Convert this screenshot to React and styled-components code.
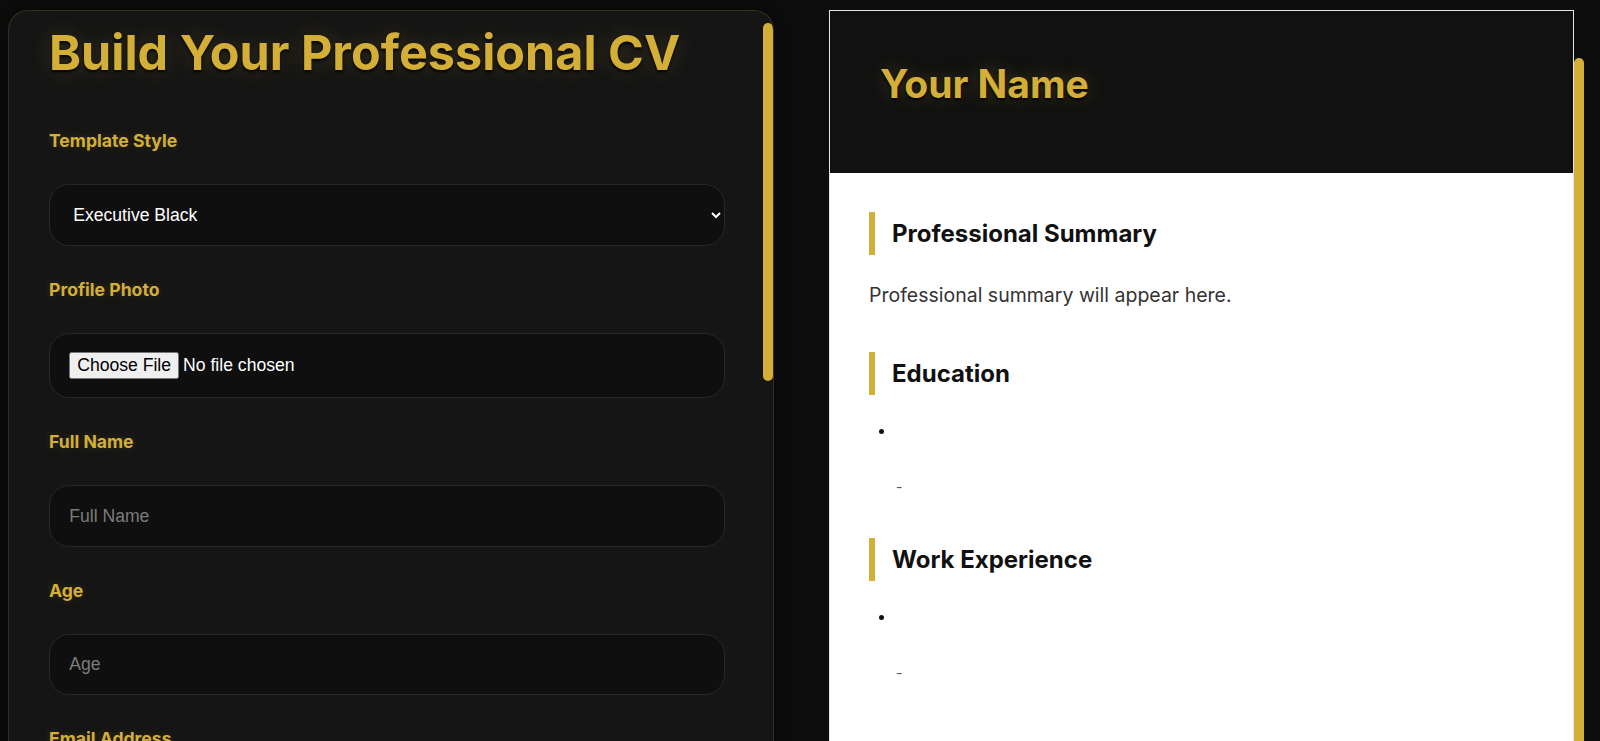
import React from "react"
import styled, { createGlobalStyle } from "styled-components"

const gold = "#d4af37"

const GlobalStyle = createGlobalStyle`
  html, body {
    margin: 0;
    padding: 0;
    height: 100%;
    overflow: hidden;
    background: #0d0d0d;
    font-family: "Inter", "Noto Sans", sans-serif;
  }
  * {
    box-sizing: border-box;
  }
`

const Page = styled.main`
  display: grid;
  grid-template-columns: 766px 755px;
  column-gap: 55px;
  padding: 10px 16px 0 8px;
  align-items: start;
`

// custom scroll indicator drawn beside each panel's content
const ScrollRail = styled.div`
  flex: 0 0 10px;
  padding-top: ${({ $offset }) => $offset}px;
`

const ScrollThumb = styled.div`
  width: 10px;
  height: ${({ $size }) => $size}px;
  background: ${gold};
  border-radius: 10px;
`

const FormCard = styled.section`
  display: flex;
  height: 780px;
  overflow: hidden;
  background: #151515;
  border: 1px solid rgba(212, 175, 55, 0.18);
  border-radius: 20px;
  box-shadow: 0 0 30px rgba(0, 0, 0, 0.5);
`

const FormContent = styled.div`
  flex: 1;
  min-width: 0;
  padding: 12px 38px 40px 40px;
`

const Title = styled.h1`
  margin: 0 0 47px;
  font-size: 48.5px;
  font-weight: 700;
  line-height: 60px;
  color: ${gold};
  text-shadow: 0 2px 3px rgba(0, 0, 0, 0.9), 0 0 22px rgba(212, 175, 55, 0.2);
`

const Form = styled.form`
  display: flex;
  flex-direction: column;
`

const Field = styled.div`
  display: flex;
  flex-direction: column;
  margin-bottom: 33px;
`

const Label = styled.label`
  display: block;
  margin-bottom: 33px;
  font-size: 1.1rem;
  font-weight: 700;
  line-height: 21px;
  color: ${gold};
  text-shadow: 0 0 8px rgba(212, 175, 55, 0.18);
`

const controlStyles = `
  width: 100%;
  padding: 1.2rem 1.2rem;
  background: #0f0f0f;
  border: 1px solid #2a2920;
  border-radius: 20px;
  color: #ffffff;
  font-family: "Liberation Sans", Arial, sans-serif;
  font-size: 1.1rem;
  outline: none;

  &::placeholder {
    color: #7c7c7c;
  }
`

const Input = styled.input`
  ${controlStyles}
  ${({ type }) => type === "file" && "padding-top: 18px; padding-bottom: 18px;"}
`

const Select = styled.select`
  ${controlStyles}
  padding-right: 0.6rem;
`

const TextArea = styled.textarea`
  ${controlStyles}
  min-height: 140px;
  resize: vertical;
`

const SubmitButton = styled.button`
  padding: 1.2rem;
  border: none;
  border-radius: 20px;
  background: ${gold};
  color: #111;
  font-family: "Inter", sans-serif;
  font-size: 1.1rem;
  font-weight: 700;
`

const PreviewPane = styled.section`
  display: flex;
  height: 780px;
  overflow: hidden;
`

const Paper = styled.article`
  flex: 1;
  min-width: 0;
  background: #ffffff;
  border: 1px solid #e4e4e4;
  color: #222;
`

const PaperHeader = styled.header`
  background: #111111;
  padding: 49px 50px 49px;
`

const Name = styled.h1`
  margin: 0 0 16px;
  font-size: 39px;
  font-weight: 700;
  line-height: 48px;
  color: ${gold};
  text-shadow: 0 2px 3px rgba(0, 0, 0, 0.9), 0 0 18px rgba(212, 175, 55, 0.25);
`

const PaperBody = styled.div`
  padding: 39px 39px;
`

const Section = styled.section`
  margin-bottom: 35px;
`

const SectionTitle = styled.h2`
  margin: 0 0 19px;
  padding: 7px 0 7px 17px;
  border-left: 6px solid ${gold};
  font-size: 24px;
  font-weight: 700;
  line-height: normal;
  color: #111;
`

const Summary = styled.p`
  margin: 0;
  padding: 5px 0 6px;
  font-size: 19.5px;
  line-height: 32px;
  color: #333;
`

const EntryList = styled.ul`
  margin: 0;
  padding-left: 27px;
  font-size: 16px;
  color: #111;
`

const Entry = styled.li`
  line-height: 32px;
`

const EntryTitle = styled.div`
  font-weight: 600;
  min-height: 32px;
`

const EntryMeta = styled.div`
  margin-top: 25px;
  font-size: 14px;
  color: #555;
`

const templates = ["Executive Black", "Modern Minimal", "Classic Elegant"]

const textFields = [
  { id: "name", label: "Full Name", type: "text" },
  { id: "age", label: "Age", type: "number" },
  { id: "email", label: "Email Address", type: "email" },
  { id: "phone", label: "Phone Number", type: "tel" },
  { id: "address", label: "Address", type: "text" },
]

const education = [{ degree: "", school: "", year: "" }]
const experience = [{ role: "", company: "", period: "" }]

function EntryBlock({ title, meta }) {
  return (
    <Entry>
      <EntryTitle>{title}</EntryTitle>
      <EntryMeta>{meta}</EntryMeta>
    </Entry>
  )
}

export default function App() {
  return (
    <>
      <GlobalStyle />
      <Page>
        <FormCard>
          <FormContent>
            <Title>Build Your Professional CV</Title>
            <Form onSubmit={(e) => e.preventDefault()}>
              <Field>
                <Label htmlFor="template">Template Style</Label>
                <Select id="template" defaultValue="Executive Black">
                  {templates.map((t) => (
                    <option key={t}>{t}</option>
                  ))}
                </Select>
              </Field>
              <Field>
                <Label htmlFor="photo">Profile Photo</Label>
                <Input id="photo" type="file" accept="image/*" />
              </Field>
              {textFields.map((f) => (
                <Field key={f.id}>
                  <Label htmlFor={f.id}>{f.label}</Label>
                  <Input id={f.id} type={f.type} placeholder={f.label} />
                </Field>
              ))}
              <Field>
                <Label htmlFor="summary">Professional Summary</Label>
                <TextArea id="summary" placeholder="Professional Summary" />
              </Field>
              <SubmitButton type="submit">Download CV</SubmitButton>
            </Form>
          </FormContent>
          <ScrollRail $offset={12}>
            <ScrollThumb $size={358} />
          </ScrollRail>
        </FormCard>

        <PreviewPane>
          <Paper>
            <PaperHeader>
              <Name>Your Name</Name>
            </PaperHeader>
            <PaperBody>
              <Section>
                <SectionTitle>Professional Summary</SectionTitle>
                <Summary>Professional summary will appear here.</Summary>
              </Section>
              <Section>
                <SectionTitle>Education</SectionTitle>
                <EntryList>
                  {education.map((e, i) => (
                    <EntryBlock
                      key={i}
                      title={e.degree || "\u00a0"}
                      meta={`${e.school} - ${e.year}`}
                    />
                  ))}
                </EntryList>
              </Section>
              <Section>
                <SectionTitle>Work Experience</SectionTitle>
                <EntryList>
                  {experience.map((w, i) => (
                    <EntryBlock
                      key={i}
                      title={w.role || "\u00a0"}
                      meta={`${w.company} - ${w.period}`}
                    />
                  ))}
                </EntryList>
              </Section>
            </PaperBody>
          </Paper>
          <ScrollRail $offset={48}>
            <ScrollThumb $size={740} />
          </ScrollRail>
        </PreviewPane>
      </Page>
    </>
  )
}
